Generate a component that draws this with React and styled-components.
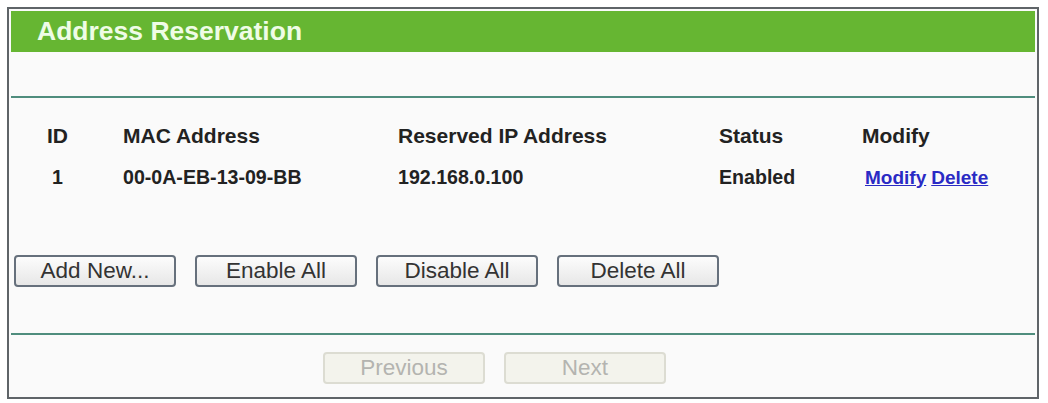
import React from 'react';
import styled, { createGlobalStyle } from 'styled-components';

const GlobalStyle = createGlobalStyle`
  html, body {
    margin: 0;
    padding: 0;
    background: #ffffff;
    font-family: "Liberation Sans", Arial, sans-serif;
  }
`;

const Page = styled.div`
  padding: 7px 0 0 7px;
`;

const Panel = styled.div`
  width: 1032px;
  box-sizing: border-box;
  border: 2px solid #5f6468;
  padding: 2px 2px 13px;
  background: #fafafa;
`;

const TitleBar = styled.div`
  height: 41px;
  background: #66b632;
  display: flex;
  align-items: center;
  padding-left: 26px;
  color: #effce6;
  font-size: 26.5px;
  font-weight: bold;
`;

const Divider = styled.div`
  height: 2px;
  background: #4f8d7d;
  margin-top: ${({ $top }) => $top}px;
`;

const Table = styled.div`
  padding: 15px 0 0 27px;
`;

const Row = styled.div`
  display: grid;
  grid-template-columns: 85px 275px 321px 143px 1fr;
  height: 43px;
  align-items: center;
  font-size: ${({ $head }) => ($head ? '21px' : '19.6px')};
  font-weight: bold;
  color: #222;
  padding-top: ${({ $head }) => ($head ? '3px' : '0')};
  box-sizing: border-box;
`;

const Cell = styled.div`
  white-space: nowrap;
  ${({ $center }) => $center && 'width: 39px; text-align: center;'}
`;

const Links = styled.div`
  display: flex;
  gap: 5px;
  padding-left: 3px;
  font-size: 19px;
`;

const Link = styled.a`
  color: #2a2ac4;
  text-decoration: underline;
  cursor: pointer;
`;

const ButtonRow = styled.div`
  display: flex;
  gap: 19px;
  margin: ${({ $top }) => $top}px 0 0 ${({ $left }) => $left}px;
`;

const Button = styled.button`
  width: 162px;
  height: 32px;
  box-sizing: border-box;
  border: 2px solid ${({ disabled }) => (disabled ? '#dcdcd2' : '#66707c')};
  border-radius: 4px;
  background: ${({ disabled }) =>
    disabled ? '#f3f3ec' : 'linear-gradient(#fcfcfc, #e7e7e7)'};
  color: ${({ disabled }) => (disabled ? '#b4b4b0' : '#333')};
  font-family: "Liberation Sans", Arial, sans-serif;
  font-size: 22.5px;
  line-height: 1;
  padding: 0;
`;

const rows = [{ id: 1, mac: '00-0A-EB-13-09-BB', ip: '192.168.0.100', status: 'Enabled' }];

export default function App() {
  return (
    <Page>
      <GlobalStyle />
      <Panel>
        <TitleBar>Address Reservation</TitleBar>
        <Divider $top={44} />
        <Table>
          <Row $head>
            <Cell $center>ID</Cell>
            <Cell>MAC Address</Cell>
            <Cell>Reserved IP Address</Cell>
            <Cell>Status</Cell>
            <Cell>Modify</Cell>
          </Row>
          {rows.map((r) => (
            <Row key={r.id}>
              <Cell $center>{r.id}</Cell>
              <Cell>{r.mac}</Cell>
              <Cell>{r.ip}</Cell>
              <Cell>{r.status}</Cell>
              <Links>
                <Link>Modify</Link>
                <Link>Delete</Link>
              </Links>
            </Row>
          ))}
        </Table>
        <ButtonRow $top={56} $left={3}>
          <Button>Add New...</Button>
          <Button>Enable All</Button>
          <Button>Disable All</Button>
          <Button>Delete All</Button>
        </ButtonRow>
        <Divider $top={46} />
        <ButtonRow $top={17} $left={312}>
          <Button disabled>Previous</Button>
          <Button disabled>Next</Button>
        </ButtonRow>
      </Panel>
    </Page>
  );
}
